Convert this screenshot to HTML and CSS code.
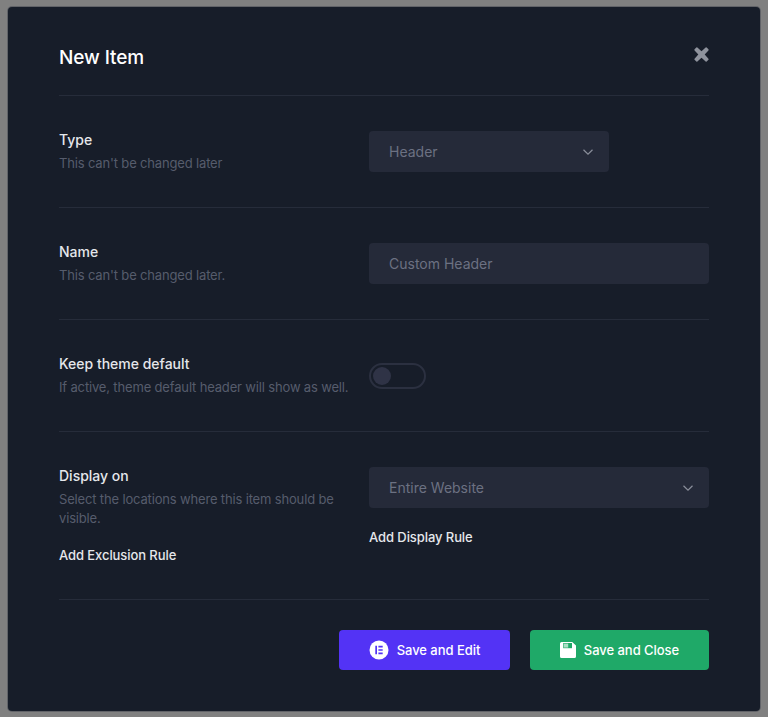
FILE: index.html
```html
<!DOCTYPE html>
<html lang="en">
<head>
<meta charset="utf-8">
<title>New Item</title>
<link rel="stylesheet" href="styles.css">
</head>
<body>
<div class="modal">
  <header class="modal-head">
    <h1 class="modal-title">New Item</h1>
    <svg class="close" width="15" height="15" viewBox="0 0 16 16" aria-hidden="true"><path d="M3.600.6 8 4.600 12.400.6a.8.8 0 0 1 1.100 0l1.900 1.900a.8.8 0 0 1 0 1.100L11.400 8l4 4.400a.8.8 0 0 1 0 1.100l-1.900 1.900a.8.8 0 0 1-1.100 0L8 11.400l-4.400 4a.8.8 0 0 1-1.100 0L.6 13.500a.8.8 0 0 1 0-1.100L4.600 8 .6 3.600a.8.8 0 0 1 0-1.100L2.500.6a.8.8 0 0 1 1.100 0Z"/></svg>
  </header>
  <section class="row">
    <div class="info">
      <div class="label">Type</div>
      <p class="hint">This can't be changed later</p>
    </div>
    <div class="control">
      <div class="field select short">
        <span>Header</span>
        <svg class="chev" width="12" height="8" viewBox="0 0 12 8" aria-hidden="true"><path d="M1.500 1.800 6 6.200l4.500-4.400"/></svg>
      </div>
    </div>
  </section>
  <section class="row">
    <div class="info">
      <div class="label">Name</div>
      <p class="hint">This can't be changed later.</p>
    </div>
    <div class="control">
      <div class="field"><span>Custom Header</span></div>
    </div>
  </section>
  <section class="row">
    <div class="info">
      <div class="label">Keep theme default</div>
      <p class="hint">If active, theme default header will show as well.</p>
    </div>
    <div class="control">
      <div class="toggle"><span class="knob"></span></div>
    </div>
  </section>
  <section class="row">
    <div class="info">
      <div class="label">Display on</div>
      <p class="hint">Select the locations where this item should be visible.</p>
      <div class="link link-left">Add Exclusion Rule</div>
    </div>
    <div class="control">
      <div class="field select">
        <span>Entire Website</span>
        <svg class="chev" width="12" height="8" viewBox="0 0 12 8" aria-hidden="true"><path d="M1.500 1.800 6 6.200l4.500-4.400"/></svg>
      </div>
      <div class="link link-right">Add Display Rule</div>
    </div>
  </section>
  <footer class="actions">
    <button class="btn btn-edit" type="button">
      <svg width="20" height="20" viewBox="0 0 20 20" aria-hidden="true"><circle cx="10" cy="10" r="9.500" fill="#fff"/><path fill="#5333f5" d="M6.300 5.700h1.700v8.600H6.300zM9.400 5.700h4.300v1.700H9.400zM9.400 9.150h4.300v1.700H9.400zM9.400 12.600h4.300v1.700H9.400z"/></svg>
      Save and Edit
    </button>
    <button class="btn btn-close" type="button">
      <svg width="16" height="16" viewBox="0 0 16 16" aria-hidden="true"><path fill="#fff" d="M1.600 0h10.600L16 3.600v10.800a1.600 1.600 0 0 1-1.600 1.600H1.600A1.600 1.600 0 0 1 0 14.400V1.600A1.600 1.600 0 0 1 1.600 0Z"/><path fill="#1fa968" d="M3.200 1h8.800v5.200H3.200z"/><path fill="#a9dfc4" d="M3.800 1.600h4.400v4H3.800z"/></svg>
      Save and Close
    </button>
  </footer>
</div>
</body>
</html>
```
FILE: styles.css
```css
* { box-sizing: border-box; }
html, body { height: 100%; }
body {
  margin: 0;
  background: #808080;
  font-family: Inter, "Liberation Sans", sans-serif;
  padding: 7px 8px 6px;
}
.modal {
  background: #171d29;
  border-radius: 4px;
  height: 704px;
  padding: 0 51px;
  box-shadow: 0 0 0 1px rgba(40, 45, 60, .35);
}
.modal-head {
  height: 89px;
  padding-top: 40px;
  border-bottom: 1px solid #262c3a;
  display: flex;
  justify-content: space-between;
  align-items: flex-start;
}
.modal-title {
  margin: 0;
  font-size: 19px;
  line-height: 22px;
  font-weight: 500;
  letter-spacing: -.1px;
  color: #fff;
}
.close { fill: #8f939d; }
.row {
  display: grid;
  grid-template-columns: 300px 340px;
  column-gap: 10px;
  padding: 35px 0;
  border-bottom: 1px solid #262c3a;
}
.label {
  font-size: 14px;
  line-height: 18px;
  font-weight: 500;
  color: #e5e7eb;
}
.hint {
  margin: 5px 0 -1px;
  font-size: 13px;
  line-height: 19px;
  letter-spacing: -.16px;
  color: #565c6c;
}
.field {
  height: 41px;
  background: #252a39;
  border-radius: 4px;
  padding: 0 15px 0 20px;
  display: flex;
  align-items: center;
  justify-content: space-between;
  font-size: 14px;
  color: #6c7182;
}
.short { width: 240px; }
.chev { fill: none; stroke: #8a8e9a; stroke-width: 1.2; }
.toggle {
  width: 57px;
  height: 26px;
  margin-top: 8px;
  border: 2px solid #2b3040;
  border-radius: 13px;
  padding: 2px;
}
.knob {
  display: block;
  width: 18px;
  height: 18px;
  border-radius: 50%;
  background: #2f3346;
}
.link {
  font-size: 13px;
  line-height: 18px;
  font-weight: 500;
  letter-spacing: -.08px;
  color: #e5e7eb;
}
.link-left { margin-top: 19px; }
.link-right { margin-top: 20px; }
.actions {
  display: flex;
  justify-content: flex-end;
  gap: 20px;
  padding-top: 30px;
}
.btn {
  height: 40px;
  border: 0;
  border-radius: 4px;
  color: #fff;
  font-family: inherit;
  font-size: 13px;
  font-weight: 500;
  letter-spacing: -.04px;
  display: flex;
  align-items: center;
  justify-content: center;
  gap: 8px;
}
.btn-edit { width: 171px; background: #5333f5; }
.btn-close { width: 179px; background: #1fa968; }
```
